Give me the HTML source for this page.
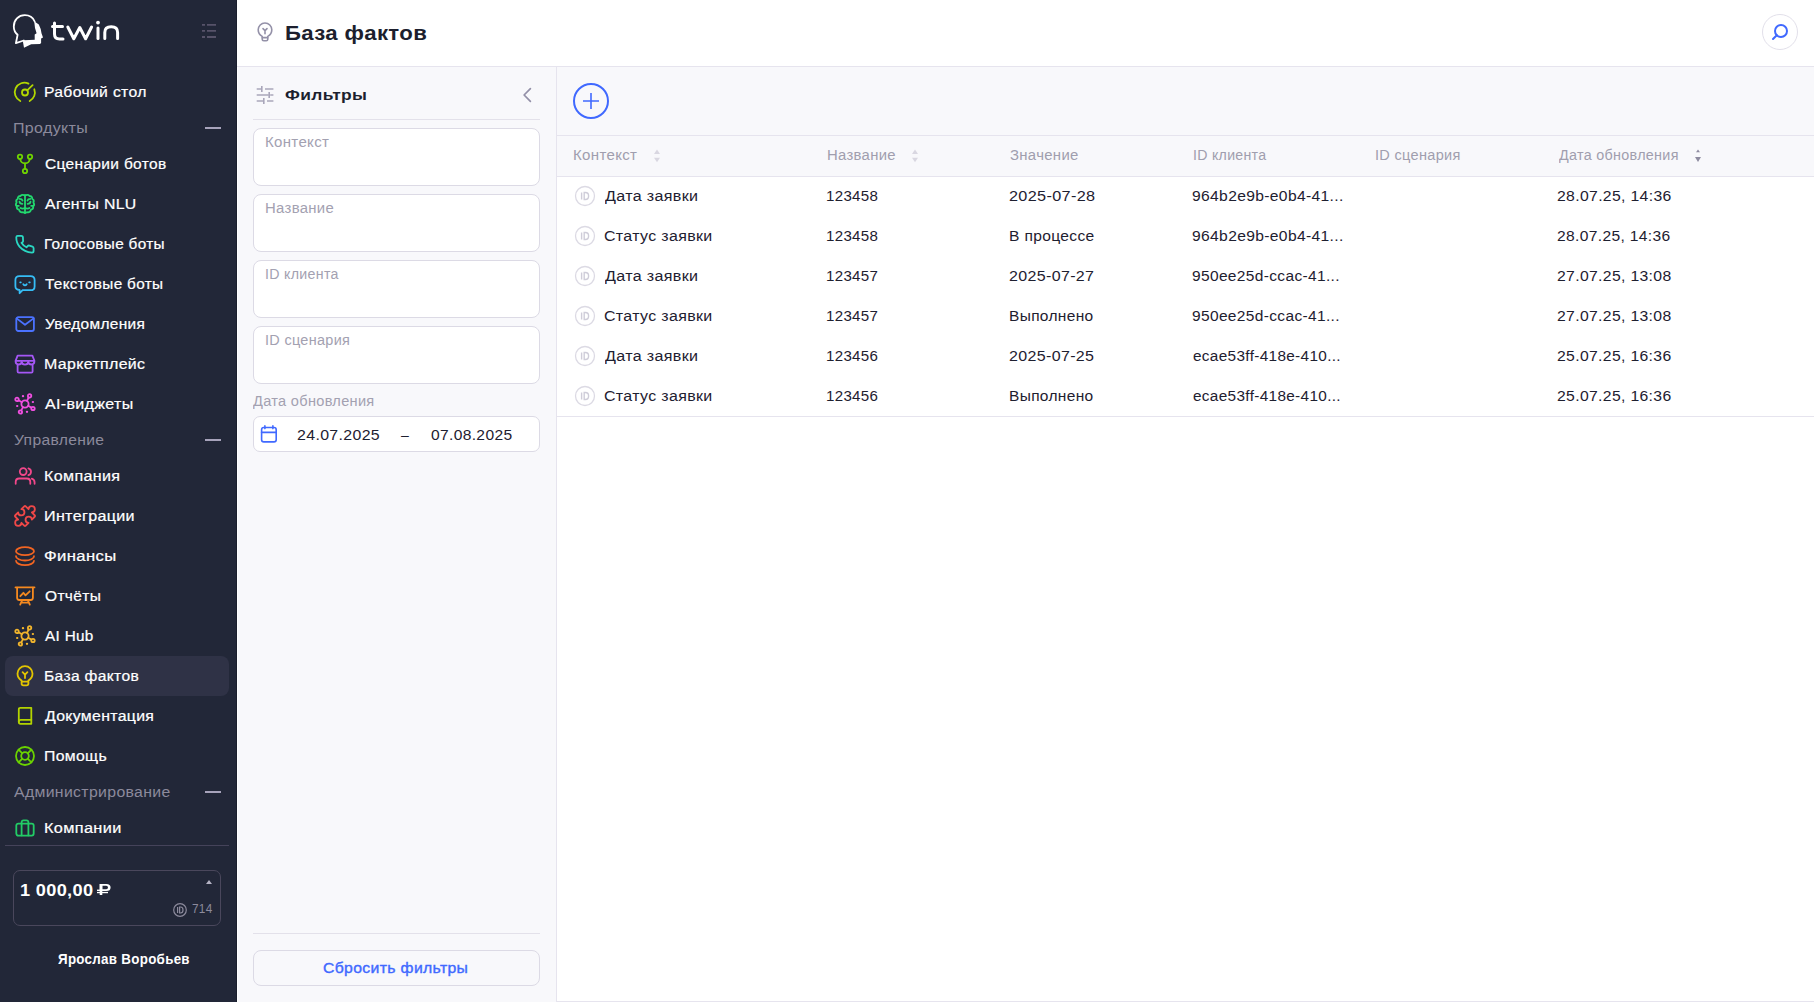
<!DOCTYPE html>
<html><head><meta charset="utf-8">
<style>
*{box-sizing:border-box;margin:0;padding:0}
html,body{width:1814px;height:1002px;overflow:hidden;background:#fff;font-family:"Liberation Sans",sans-serif}
.abs{position:absolute}
#sb{position:absolute;left:0;top:0;width:237px;height:1002px;background:#222738;border-right:1px solid #1a1e2d}
.it{position:absolute;left:0;width:236px;height:40px}
.act{position:absolute;left:5px;width:224px;height:40px;background:#2f3246;border-radius:8px}
.it svg{position:absolute;left:12px;top:7px;width:26px;height:26px;fill:none;stroke-width:1.8;stroke-linecap:round;stroke-linejoin:round}

.sec{position:absolute;left:0;width:236px;height:32px}

.sec i{position:absolute;left:205px;top:15px;width:16px;height:2px;background:#a7a3bb}
#hdr{position:absolute;left:237px;top:0;width:1577px;height:67px;background:#fff;border-bottom:1px solid #e6e4ee}
#fp{position:absolute;left:237px;top:67px;width:320px;height:935px;background:#f8f8fb;border-left:1px solid #fff;border-right:1px solid #e6e4ee}
#main{position:absolute;left:557px;top:67px;width:1257px;height:935px;background:#fff;border-bottom:1px solid #e6e4ee}
.inp{position:absolute;left:15px;width:287px;height:58px;background:#fff;border:1px solid #dcdae5;border-radius:8px}



.row{position:absolute;left:0;width:1257px;height:40px}
.idc{position:absolute;left:18px;top:10px;width:20px;height:20px}
.sort{position:absolute;top:13px;width:8px;height:14px}
.tx{position:absolute;white-space:nowrap;transform-origin:0 0}
</style></head><body>
<div id="sb">
<svg class="abs" style="left:0;top:0" width="130" height="60" viewBox="0 0 130 60">
  <path d="M34.7 21.5C33 17.5 29 15.2 24.8 15.2C18.5 15.2 13.8 20 13.8 26.4C13.8 30 15.3 32.8 17.6 34.8L15.9 43.2L23.8 40.5" fill="none" stroke="#fff" stroke-width="1.8" stroke-linejoin="round" stroke-linecap="round"/>
  <path d="M34.2 21.2L38.8 24.5L40.7 29L41.5 33.2L43 37.4L41.1 38.6L41.1 43.1L40 43.9L31.2 44.2L24 47.7L22.9 41.6L24 40.3L34.7 39.7L34.7 34.4L36.6 33.2L35 28Z" fill="#fff"/>
  <g fill="none" stroke="#fff" stroke-width="3" stroke-linecap="round" stroke-linejoin="round">
    <path d="M54.5 23V34Q54.5 39 59.5 39H63"/><path d="M52.5 26.5H62.5"/>
    <path d="M67.8 27L73.8 38.8L79.8 27.5L85.6 38.8L91.6 27"/>
    <path d="M98 28V38.6"/>
    <path d="M104.8 38.6V32.5Q104.8 26.8 111.2 26.8Q117.6 26.8 117.6 32.5V38.6"/>
  </g>
  <circle cx="98" cy="22.6" r="1.9" fill="#fff"/>
</svg>
<svg class="abs" style="left:196px;top:18px" width="26" height="26" viewBox="196 18 26 26"><g stroke="#575369" stroke-width="1.8"><path d="M202 24.8H205M207 24.8H216M202 30.9H205M207 30.9H216M202 37H205M207 37H216"/></g></svg>
<div class="it" style="top:72px"><svg viewBox="0 0 26 26" style="stroke:#b3d800"><path d="M8.3 22A9.5 9.5 0 0 1 16.5 4.6"/><path d="M22.3 10.3A9.5 9.5 0 0 1 17.7 22"/><circle cx="13" cy="13.5" r="3"/><path d="M15.2 11.3L20.6 6.2"/></svg></div>
<div class="sec" style="top:112px"><i></i></div>
<div class="it" style="top:144px"><svg viewBox="0 0 26 26" style="stroke:#6fd300"><circle cx="8" cy="5.8" r="2.2"/><circle cx="18" cy="5.8" r="2.2"/><circle cx="13" cy="20" r="2.2"/><path d="M8.2 8C8.5 10.5 10.5 12.3 13 12.3C15.5 12.3 17.5 10.5 17.8 8"/><path d="M13 12.3V17.8"/></svg></div>
<div class="it" style="top:184px"><svg viewBox="0 0 26 26" style="stroke:#22d86e"><path d="M13 4.2V21.8"/><path d="M13 4.6C11.5 3.6 9.5 3.8 8.3 5C6.6 5 5.6 6.3 5.8 7.8C4.4 8.6 4 10.3 4.6 11.5C3.8 12.6 3.8 14.4 4.8 15.3C4.6 17 5.6 18.4 7 18.7C7.6 20.4 9.4 21.6 11 21.2C11.7 21.6 12.5 21.8 13 21.8"/><path d="M13 4.6C14.5 3.6 16.5 3.8 17.7 5C19.4 5 20.4 6.3 20.2 7.8C21.6 8.6 22 10.3 21.4 11.5C22.2 12.6 22.2 14.4 21.2 15.3C21.4 17 20.4 18.4 19 18.7C18.4 20.4 16.6 21.6 15 21.2C14.3 21.6 13.5 21.8 13 21.8"/><path d="M7.6 7.8C9 7.8 10.2 8.5 10.5 9.6"/><path d="M7.5 10.6C7.6 12 8.8 12.8 10.4 12.8"/><path d="M18.4 7.8C17 7.8 15.8 8.5 15.5 9.6"/><path d="M18.5 10.6C18.4 12 17.2 12.8 15.6 12.8"/><path d="M5.2 14.8H6.8"/><path d="M19.2 14.8H20.8"/><path d="M8.5 17C9.5 17.6 11.5 17.6 13 17.2C14.5 17.6 16.5 17.6 17.5 17"/></svg></div>
<div class="it" style="top:224px"><svg viewBox="0 0 26 26" style="stroke:#2ad8c3"><path d="M5.6 4.8H9.4Q10.7 4.8 10.9 6L11.1 9.9Q11.1 10.8 10.3 11.3L9.5 11.7Q11.3 14.8 14.5 16.3L15.6 15.1Q16.4 14.3 17.4 14.6L20.5 15.7Q21.6 16.1 21.6 17.2V20Q21.6 21.6 20 21.6Q12.5 21.2 7.5 15.6Q4.2 11.6 4.3 6.3Q4.4 4.8 5.6 4.8Z"/></svg></div>
<div class="it" style="top:264px"><svg viewBox="0 0 26 26" style="stroke:#36bdf5"><path d="M7.5 5.2H18.5Q22.6 5.2 22.6 9V15.4Q22.6 19.2 18.6 19.2H10.6L7.6 22.2V19Q3.4 18.6 3.4 15.2V9Q3.4 5.2 7.5 5.2Z"/><path d="M11.3 13.2Q13 15.6 14.7 13.2"/><path d="M8.2 11.3H8.8M17.2 11.3H17.8"/></svg></div>
<div class="it" style="top:304px"><svg viewBox="0 0 26 26" style="stroke:#4b72ff"><rect x="4.3" y="6.2" width="17.6" height="13.8" rx="2"/><path d="M4.6 7.4L13 13.8L21.6 7.4"/></svg></div>
<div class="it" style="top:344px"><svg viewBox="0 0 26 26" style="stroke:#a557f5"><path d="M5.6 4.6H20.4L22.4 9.8V10.6Q22.4 13.5 19.4 13.5Q16.5 13.5 16.3 10.6Q16.1 13.6 13 13.6Q9.9 13.6 9.7 10.6Q9.5 13.5 6.6 13.5Q3.6 13.5 3.6 10.6V9.8Z"/><path d="M3.8 9.8H22.2"/><path d="M5.6 14V20.4Q5.6 21.6 6.8 21.6H19.4Q20.6 21.6 20.6 20.4V14"/></svg></div>
<div class="it" style="top:384px"><svg viewBox="0 0 26 26" style="stroke:#f04fe0"><circle cx="13" cy="13" r="3.6"/><circle cx="5" cy="8.4" r="1.7"/><circle cx="17.6" cy="4.9" r="1.7"/><circle cx="21" cy="17.5" r="1.7"/><circle cx="8.4" cy="21" r="1.7"/><path d="M6.6 9.3L9.9 11.2M16.7 6.5L15 9.8M19.4 16.6L16.2 14.8M9.3 19.4L11 16.2"/><path d="M10.9 5.2h0.2M20.8 11h0.2M5.1 15h0.2M14.9 20.8h0.2" stroke-width="2.2"/></svg></div>
<div class="sec" style="top:424px"><i></i></div>
<div class="it" style="top:456px"><svg viewBox="0 0 26 26" style="stroke:#f2478a"><circle cx="11.2" cy="8.6" r="3.4"/><path d="M16.4 5.3Q19 6.1 19 8.7Q19 11.3 16.4 12.2"/><path d="M3.7 20.8V19Q3.7 15.5 7.2 15.5H14.8Q18.3 15.5 18.3 19V20.8"/><path d="M19.8 15.7Q22.6 16.6 22.6 19.4V20.8"/></svg></div>
<div class="it" style="top:496px"><svg viewBox="0 0 26 26" style="stroke:#f04848"><path transform="translate(13 13) rotate(45) scale(1.05)" stroke-width="1.72" d="M-6 -7H-2.2A3 3 0 1 1 2.2 -7H6Q7 -7 7 -6V-2.2A3 3 0 1 0 7 2.2V6Q7 7 6 7H2.2A3 3 0 1 1 -2.2 7H-6Q-7 7 -7 6V2.2A3 3 0 1 0 -7 -2.2V-6Q-7 -7 -6 -7Z"/></svg></div>
<div class="it" style="top:536px"><svg viewBox="0 0 26 26" style="stroke:#f26522"><ellipse cx="13" cy="8.2" rx="9" ry="4"/><path d="M4 13.2A9 4.3 0 0 0 22 13.2"/><path d="M4 17.8A9 4.3 0 0 0 22 17.8"/></svg></div>
<div class="it" style="top:576px"><svg viewBox="0 0 26 26" style="stroke:#f5891f"><path d="M3.5 4.4H22.5"/><path d="M5.1 4.6V14.8Q5.1 17 7.3 17H18.7Q20.9 17 20.9 14.8V4.6"/><path d="M8.3 13.2L11.4 9.8L13.5 12.4L17.7 8.3"/><path d="M10.2 17.2L8.2 21.6M15.8 17.2L17.8 21.6M9.6 19.6H16.4"/></svg></div>
<div class="it" style="top:616px"><svg viewBox="0 0 26 26" style="stroke:#f2b52c"><circle cx="13" cy="13" r="3.6"/><circle cx="5" cy="8.4" r="1.7"/><circle cx="17.6" cy="4.9" r="1.7"/><circle cx="21" cy="17.5" r="1.7"/><circle cx="8.4" cy="21" r="1.7"/><path d="M6.6 9.3L9.9 11.2M16.7 6.5L15 9.8M19.4 16.6L16.2 14.8M9.3 19.4L11 16.2"/><path d="M10.9 5.2h0.2M20.8 11h0.2M5.1 15h0.2M14.9 20.8h0.2" stroke-width="2.2"/></svg></div>
<div class="act" style="top:656px"></div>
<div class="it" style="top:656px"><svg viewBox="0 0 26 26" style="stroke:#e3c500"><path d="M9.6 17.6Q5.5 15.2 5.5 10.6A7.5 7.5 0 0 1 20.5 10.6Q20.5 15.2 16.4 17.6V20.6Q16.4 22.4 14.6 22.4H11.4Q9.6 22.4 9.6 20.6Z"/><path d="M9.8 18.6H16.2"/><path d="M10.6 9.2L13 11.6L15.4 9.2M13 11.6V15"/></svg></div>
<div class="it" style="top:696px"><svg viewBox="0 0 26 26" style="stroke:#b3d300"><path d="M19.3 4.8H8.3Q6.8 4.8 6.8 6.3V19Q6.8 20.8 8.6 20.8H19.3Z"/><path d="M6.8 18.8Q6.8 16.8 8.8 16.8H19.3"/></svg></div>
<div class="it" style="top:736px"><svg viewBox="0 0 26 26" style="stroke:#6bd300"><circle cx="13" cy="13" r="9"/><circle cx="13" cy="13" r="3.8"/><path d="M6.6 6.6L10.3 10.3M19.4 6.6L15.7 10.3M6.6 19.4L10.3 15.7M19.4 19.4L15.7 15.7"/></svg></div>
<div class="sec" style="top:776px"><i></i></div>
<div class="it" style="top:808px"><svg viewBox="0 0 26 26" style="stroke:#22cc66"><rect x="4.3" y="8.6" width="17.4" height="12" rx="2"/><path d="M9.6 8.6V7.3Q9.6 5.3 11.6 5.3H14.4Q16.4 5.3 16.4 7.3V8.6"/><path d="M9.6 8.8V20.4M16.4 8.8V20.4"/></svg></div>
<div class="abs" style="left:5px;top:845px;width:224px;height:1px;background:#45435a"></div>
<div class="abs" style="left:13px;top:870px;width:208px;height:56px;border:1px solid #4a475c;border-radius:7px"></div>
<svg class="abs" style="left:95px;top:882px" width="17" height="16" viewBox="95 882 17 16"><g fill="#fff"><rect x="99.7" y="884" width="2.6" height="11"/><path fill-rule="evenodd" d="M99.7 884H106.3Q110.6 884 110.6 887.5Q110.6 891 106.3 891H99.7ZM102.3 885.7H106.2Q108 885.7 108 887.5Q108 889.3 106.2 889.3H102.3Z"/><rect x="97" y="889.6" width="5" height="1.4"/><rect x="97" y="891.9" width="11" height="1.3"/></g></svg>
<svg class="abs" style="left:205px;top:879px" width="8" height="6" viewBox="0 0 8 6"><path d="M1 5L4 1L7 5Z" fill="#b5b3c4"/></svg>
<svg class="abs" style="left:172px;top:902px" width="16" height="16" viewBox="0 0 16 16"><circle cx="8" cy="8" r="6.3" fill="none" stroke="#8c8a9c" stroke-width="1.2"/><path d="M5.6 5V11M7.6 5H8.6Q11 5 11 8Q11 11 8.6 11H7.6Z" fill="none" stroke="#8c8a9c" stroke-width="1.2"/></svg>
</div>
<div id="hdr"></div>
<svg class="abs" style="left:252px;top:19px" width="26" height="26" viewBox="0 0 26 26"><g fill="none" stroke="#9491a8" stroke-width="1.6" stroke-linecap="round" stroke-linejoin="round"><path d="M10.2 17.4Q6.2 15.2 6.2 10.8A6.8 6.8 0 0 1 19.8 10.8Q19.8 15.2 15.8 17.4V20.2Q15.8 21.8 14.2 21.8H11.8Q10.2 21.8 10.2 20.2Z"/><path d="M10.4 18.6H15.6"/><path d="M11 9.6L13 11.6L15 9.6M13 11.6V14.8"/></g></svg>
<div class="abs" style="left:1762px;top:14px;width:36px;height:36px;border:1px solid #e2e0ea;border-radius:50%"></div>
<svg class="abs" style="left:1766px;top:18px" width="28" height="28" viewBox="1766 18 28 28"><g fill="none" stroke="#4069ff" stroke-width="2" stroke-linecap="round"><circle cx="1781" cy="31" r="6"/><path d="M1776.8 35.2L1773 39"/></g></svg>
<div id="fp"></div>
<svg class="abs" style="left:254px;top:84px" width="22" height="22" viewBox="254 84 22 22"><g stroke="#a9a6ba" stroke-width="1.6" fill="none"><path d="M256.7 89H261M265 89H273.4M261.8 86V92"/><path d="M256.7 95H268.3M270.2 95H273.4M269.2 92V98"/><path d="M256.7 101H263M267 101H273.4M263.8 98V104"/></g></svg>
<svg class="abs" style="left:518px;top:84px" width="20" height="22" viewBox="518 84 20 22"><path d="M530.4 88.6L524.1 95L530.4 101.4" fill="none" stroke="#9390a8" stroke-width="1.7" stroke-linecap="round" stroke-linejoin="round"/></svg>
<div class="abs" style="left:253px;top:119px;width:287px;height:1px;background:#e3e1ea"></div>
<div class="inp" style="left:253px;top:128px"></div>
<div class="inp" style="left:253px;top:194px"></div>
<div class="inp" style="left:253px;top:260px"></div>
<div class="inp" style="left:253px;top:326px"></div>
<div class="abs" style="left:253px;top:416px;width:287px;height:36px;background:#fff;border:1px solid #dcdae5;border-radius:7px"></div>
<svg class="abs" style="left:258px;top:423px" width="22" height="22" viewBox="258 423 22 22"><g fill="none" stroke="#4069ff" stroke-width="1.6" stroke-linecap="round" stroke-linejoin="round"><rect x="261.6" y="427.5" width="14.6" height="14.4" rx="2.2"/><path d="M261.6 432.4H276.2M264.9 425.9V428.6M272.9 425.9V428.6"/></g></svg>
<div class="abs" style="left:253px;top:933px;width:287px;height:1px;background:#e3e1ea"></div>
<div class="abs" style="left:253px;top:950px;width:287px;height:36px;border:1px solid #dcdae5;border-radius:8px"></div>
<div id="main"></div>
<div class="abs" style="left:557px;top:67px;width:1257px;height:69px;background:#f8f8fb;border-bottom:1px solid #e6e4ee"></div>
<svg class="abs" style="left:570px;top:80px" width="42" height="42" viewBox="570 80 42 42"><g fill="none" stroke="#4069ff" stroke-width="2"><circle cx="591" cy="101" r="17"/><path d="M583 101H599M591 93V109" stroke-width="1.6"/></g></svg>
<div class="abs" style="left:557px;top:136px;width:1257px;height:41px;background:#f8f8fb;border-bottom:1px solid #e6e4ee"></div>
<svg class="abs" style="left:653px;top:147px" width="8" height="18" viewBox="0 0 8 18"><path d="M1 7L4 2.6L7 7Z" fill="#d9d7e1"/><path d="M1 10.8L4 15.2L7 10.8Z" fill="#d9d7e1"/></svg>
<svg class="abs" style="left:911px;top:147px" width="8" height="18" viewBox="0 0 8 18"><path d="M1 7L4 2.6L7 7Z" fill="#d9d7e1"/><path d="M1 10.8L4 15.2L7 10.8Z" fill="#d9d7e1"/></svg>
<svg class="abs" style="left:1694px;top:147px" width="8" height="18" viewBox="0 0 8 18"><path d="M2 5.2L4 2.6L6 5.2Z" fill="#8e8ba0"/><path d="M1 10L4 15L7 10Z" fill="#8e8ba0"/></svg>
<svg class="abs" style="left:574px;top:185px" width="22" height="22" viewBox="0 0 22 22"><circle cx="11" cy="11" r="9.5" fill="none" stroke="#dcdae4" stroke-width="1.3"/><path d="M7.6 7.5V14.5M10.2 7.5H11.4Q14.6 7.5 14.6 11Q14.6 14.5 11.4 14.5H10.2Z" fill="none" stroke="#cfcdd9" stroke-width="1.4"/></svg>
<svg class="abs" style="left:574px;top:225px" width="22" height="22" viewBox="0 0 22 22"><circle cx="11" cy="11" r="9.5" fill="none" stroke="#dcdae4" stroke-width="1.3"/><path d="M7.6 7.5V14.5M10.2 7.5H11.4Q14.6 7.5 14.6 11Q14.6 14.5 11.4 14.5H10.2Z" fill="none" stroke="#cfcdd9" stroke-width="1.4"/></svg>
<svg class="abs" style="left:574px;top:265px" width="22" height="22" viewBox="0 0 22 22"><circle cx="11" cy="11" r="9.5" fill="none" stroke="#dcdae4" stroke-width="1.3"/><path d="M7.6 7.5V14.5M10.2 7.5H11.4Q14.6 7.5 14.6 11Q14.6 14.5 11.4 14.5H10.2Z" fill="none" stroke="#cfcdd9" stroke-width="1.4"/></svg>
<svg class="abs" style="left:574px;top:305px" width="22" height="22" viewBox="0 0 22 22"><circle cx="11" cy="11" r="9.5" fill="none" stroke="#dcdae4" stroke-width="1.3"/><path d="M7.6 7.5V14.5M10.2 7.5H11.4Q14.6 7.5 14.6 11Q14.6 14.5 11.4 14.5H10.2Z" fill="none" stroke="#cfcdd9" stroke-width="1.4"/></svg>
<svg class="abs" style="left:574px;top:345px" width="22" height="22" viewBox="0 0 22 22"><circle cx="11" cy="11" r="9.5" fill="none" stroke="#dcdae4" stroke-width="1.3"/><path d="M7.6 7.5V14.5M10.2 7.5H11.4Q14.6 7.5 14.6 11Q14.6 14.5 11.4 14.5H10.2Z" fill="none" stroke="#cfcdd9" stroke-width="1.4"/></svg>
<svg class="abs" style="left:574px;top:385px" width="22" height="22" viewBox="0 0 22 22"><circle cx="11" cy="11" r="9.5" fill="none" stroke="#dcdae4" stroke-width="1.3"/><path d="M7.6 7.5V14.5M10.2 7.5H11.4Q14.6 7.5 14.6 11Q14.6 14.5 11.4 14.5H10.2Z" fill="none" stroke="#cfcdd9" stroke-width="1.4"/></svg>
<div class="abs" style="left:557px;top:416px;width:1257px;height:1px;background:#e6e4ee"></div>
<div id="sb0" class="tx" style="left:44.00px;top:72px;font-size:14px;font-weight:normal;color:#fff;line-height:40px;letter-spacing:0.300px;transform:scaleX(1.1223);-webkit-text-stroke:0.2px #fff;">Рабочий стол</div>
<div id="sb1" class="tx" style="left:45.00px;top:144px;font-size:14px;font-weight:normal;color:#fff;line-height:40px;letter-spacing:0.300px;transform:scaleX(1.1066);-webkit-text-stroke:0.2px #fff;">Сценарии ботов</div>
<div id="sb2" class="tx" style="left:45.00px;top:184px;font-size:14px;font-weight:normal;color:#fff;line-height:40px;letter-spacing:0.300px;transform:scaleX(1.1301);-webkit-text-stroke:0.2px #fff;">Агенты NLU</div>
<div id="sb3" class="tx" style="left:44.00px;top:224px;font-size:14px;font-weight:normal;color:#fff;line-height:40px;letter-spacing:0.300px;transform:scaleX(1.0935);-webkit-text-stroke:0.2px #fff;">Голосовые боты</div>
<div id="sb4" class="tx" style="left:45.00px;top:264px;font-size:14px;font-weight:normal;color:#fff;line-height:40px;letter-spacing:0.300px;transform:scaleX(1.0935);-webkit-text-stroke:0.2px #fff;">Текстовые боты</div>
<div id="sb5" class="tx" style="left:45.00px;top:304px;font-size:14px;font-weight:normal;color:#fff;line-height:40px;letter-spacing:0.300px;transform:scaleX(1.1027);-webkit-text-stroke:0.2px #fff;">Уведомления</div>
<div id="sb6" class="tx" style="left:44.00px;top:344px;font-size:14px;font-weight:normal;color:#fff;line-height:40px;letter-spacing:0.300px;transform:scaleX(1.1389);-webkit-text-stroke:0.2px #fff;">Маркетплейс</div>
<div id="sb7" class="tx" style="left:45.00px;top:384px;font-size:14px;font-weight:normal;color:#fff;line-height:40px;letter-spacing:0.300px;transform:scaleX(1.1429);-webkit-text-stroke:0.2px #fff;">AI-виджеты</div>
<div id="sb8" class="tx" style="left:44.00px;top:456px;font-size:14px;font-weight:normal;color:#fff;line-height:40px;letter-spacing:0.300px;transform:scaleX(1.1477);-webkit-text-stroke:0.2px #fff;">Компания</div>
<div id="sb9" class="tx" style="left:44.00px;top:496px;font-size:14px;font-weight:normal;color:#fff;line-height:40px;letter-spacing:0.300px;transform:scaleX(1.1480);-webkit-text-stroke:0.2px #fff;">Интеграции</div>
<div id="sb10" class="tx" style="left:44.00px;top:536px;font-size:14px;font-weight:normal;color:#fff;line-height:40px;letter-spacing:0.300px;transform:scaleX(1.1905);-webkit-text-stroke:0.2px #fff;">Финансы</div>
<div id="sb11" class="tx" style="left:45.00px;top:576px;font-size:14px;font-weight:normal;color:#fff;line-height:40px;letter-spacing:0.300px;transform:scaleX(1.1082);-webkit-text-stroke:0.2px #fff;">Отчёты</div>
<div id="sb12" class="tx" style="left:45.00px;top:616px;font-size:14px;font-weight:normal;color:#fff;line-height:40px;letter-spacing:0.300px;transform:scaleX(1.0916);-webkit-text-stroke:0.2px #fff;">AI Hub</div>
<div id="sb13" class="tx" style="left:44.00px;top:656px;font-size:14px;font-weight:normal;color:#fff;line-height:40px;letter-spacing:0.300px;transform:scaleX(1.1146);-webkit-text-stroke:0.2px #fff;">База фактов</div>
<div id="sb14" class="tx" style="left:45.00px;top:696px;font-size:14px;font-weight:normal;color:#fff;line-height:40px;letter-spacing:0.300px;transform:scaleX(1.1294);-webkit-text-stroke:0.2px #fff;">Документация</div>
<div id="sb15" class="tx" style="left:44.00px;top:736px;font-size:14px;font-weight:normal;color:#fff;line-height:40px;letter-spacing:0.300px;transform:scaleX(1.1275);-webkit-text-stroke:0.2px #fff;">Помощь</div>
<div id="sb16" class="tx" style="left:44.00px;top:808px;font-size:14px;font-weight:normal;color:#fff;line-height:40px;letter-spacing:0.300px;transform:scaleX(1.1631);-webkit-text-stroke:0.2px #fff;">Компании</div>
<div id="sec0" class="tx" style="left:13.00px;top:112px;font-size:14px;font-weight:normal;color:#8c8a9c;line-height:32px;letter-spacing:0.300px;transform:scaleX(1.1441);">Продукты</div>
<div id="sec1" class="tx" style="left:14.00px;top:424px;font-size:14px;font-weight:normal;color:#8c8a9c;line-height:32px;letter-spacing:0.300px;transform:scaleX(1.1175);">Управление</div>
<div id="sec2" class="tx" style="left:14.00px;top:776px;font-size:14px;font-weight:normal;color:#8c8a9c;line-height:32px;letter-spacing:0.300px;transform:scaleX(1.1301);">Администрирование</div>
<div id="bal" class="tx" style="left:20.00px;top:881px;font-size:16px;font-weight:bold;color:#fff;line-height:20px;letter-spacing:0.300px;transform:scaleX(1.1344);">1 000,00</div>
<div id="n714" class="tx" style="left:192.00px;top:902px;font-size:12.5px;font-weight:normal;color:#8c8a9c;line-height:15px;letter-spacing:0.300px;transform:scaleX(0.9411);">714</div>
<div id="name" class="tx" style="left:58.00px;top:951px;font-size:14px;font-weight:bold;color:#fff;line-height:16px;letter-spacing:0.300px;transform:scaleX(0.9545);">Ярослав Воробьев</div>
<div id="title" class="tx" style="left:285.00px;top:21px;font-size:20px;font-weight:bold;color:#1c1f2e;line-height:24px;letter-spacing:0.300px;transform:scaleX(1.1095);">База фактов</div>
<div id="filt" class="tx" style="left:285.00px;top:86px;font-size:15px;font-weight:bold;color:#1c1f2e;line-height:18px;letter-spacing:0.300px;transform:scaleX(1.1610);">Фильтры</div>
<div id="ph0" class="tx" style="left:265.00px;top:134px;font-size:14px;font-weight:normal;color:#a3a1b1;line-height:16px;letter-spacing:0.300px;transform:scaleX(1.0728);">Контекст</div>
<div id="ph1" class="tx" style="left:265.00px;top:200px;font-size:14px;font-weight:normal;color:#a3a1b1;line-height:16px;letter-spacing:0.300px;transform:scaleX(1.0635);">Название</div>
<div id="ph2" class="tx" style="left:265.00px;top:266px;font-size:14px;font-weight:normal;color:#a3a1b1;line-height:16px;letter-spacing:0.300px;transform:scaleX(1.0139);">ID клиента</div>
<div id="ph3" class="tx" style="left:265.00px;top:332px;font-size:14px;font-weight:normal;color:#a3a1b1;line-height:16px;letter-spacing:0.300px;transform:scaleX(1.0320);">ID сценария</div>
<div id="dlab" class="tx" style="left:253.00px;top:393px;font-size:14px;font-weight:normal;color:#a3a1b1;line-height:16px;letter-spacing:0.300px;transform:scaleX(1.0396);">Дата обновления</div>
<div id="d1" class="tx" style="left:297.00px;top:427px;font-size:14px;font-weight:normal;color:#1e2030;line-height:16px;letter-spacing:0.300px;transform:scaleX(1.1363);">24.07.2025</div>
<div id="d2" class="tx" style="left:401.00px;top:427px;font-size:14px;font-weight:normal;color:#1e2030;line-height:16px;letter-spacing:0.000px;transform:scaleX(1.0000);">–</div>
<div id="d3" class="tx" style="left:431.00px;top:427px;font-size:14px;font-weight:normal;color:#1e2030;line-height:16px;letter-spacing:0.300px;transform:scaleX(1.1142);">07.08.2025</div>
<div id="reset" class="tx" style="left:323.00px;top:960px;font-size:14px;font-weight:normal;color:#4069ff;line-height:16px;letter-spacing:0.300px;transform:scaleX(1.1270);-webkit-text-stroke:0.35px #4069ff;">Сбросить фильтры</div>
<div id="th0" class="tx" style="left:573.00px;top:135px;font-size:14px;font-weight:normal;color:#a09eae;line-height:40px;letter-spacing:0.300px;transform:scaleX(1.0751);">Контекст</div>
<div id="th1" class="tx" style="left:827.00px;top:135px;font-size:14px;font-weight:normal;color:#a09eae;line-height:40px;letter-spacing:0.300px;transform:scaleX(1.0602);">Название</div>
<div id="th2" class="tx" style="left:1010.00px;top:135px;font-size:14px;font-weight:normal;color:#a09eae;line-height:40px;letter-spacing:0.300px;transform:scaleX(1.0643);">Значение</div>
<div id="th3" class="tx" style="left:1193.00px;top:135px;font-size:14px;font-weight:normal;color:#a09eae;line-height:40px;letter-spacing:0.300px;transform:scaleX(1.0085);">ID клиента</div>
<div id="th4" class="tx" style="left:1375.00px;top:135px;font-size:14px;font-weight:normal;color:#a09eae;line-height:40px;letter-spacing:0.300px;transform:scaleX(1.0372);">ID сценария</div>
<div id="th5" class="tx" style="left:1559.00px;top:135px;font-size:14px;font-weight:normal;color:#a09eae;line-height:40px;letter-spacing:0.300px;transform:scaleX(1.0238);">Дата обновления</div>
<div id="r0c0" class="tx" style="left:605.00px;top:176px;font-size:14px;font-weight:normal;color:#1e2030;line-height:40px;letter-spacing:0.300px;transform:scaleX(1.1477);">Дата заявки</div>
<div id="r0c1" class="tx" style="left:826.00px;top:176px;font-size:14px;font-weight:normal;color:#1e2030;line-height:40px;letter-spacing:0.300px;transform:scaleX(1.0769);">123458</div>
<div id="r0c2" class="tx" style="left:1009.00px;top:176px;font-size:14px;font-weight:normal;color:#1e2030;line-height:40px;letter-spacing:0.300px;transform:scaleX(1.1588);">2025-07-28</div>
<div id="r0c3" class="tx" style="left:1192.00px;top:176px;font-size:14px;font-weight:normal;color:#1e2030;line-height:40px;letter-spacing:0.300px;transform:scaleX(1.1173);">964b2e9b-e0b4-41...</div>
<div id="r0c4" class="tx" style="left:1557.00px;top:176px;font-size:14px;font-weight:normal;color:#1e2030;line-height:40px;letter-spacing:0.300px;transform:scaleX(1.1260);">28.07.25, 14:36</div>
<div id="r1c0" class="tx" style="left:604.00px;top:216px;font-size:14px;font-weight:normal;color:#1e2030;line-height:40px;letter-spacing:0.300px;transform:scaleX(1.1398);">Статус заявки</div>
<div id="r1c1" class="tx" style="left:826.00px;top:216px;font-size:14px;font-weight:normal;color:#1e2030;line-height:40px;letter-spacing:0.300px;transform:scaleX(1.0769);">123458</div>
<div id="r1c2" class="tx" style="left:1009.00px;top:216px;font-size:14px;font-weight:normal;color:#1e2030;line-height:40px;letter-spacing:0.300px;transform:scaleX(1.1146);">В процессе</div>
<div id="r1c3" class="tx" style="left:1192.00px;top:216px;font-size:14px;font-weight:normal;color:#1e2030;line-height:40px;letter-spacing:0.300px;transform:scaleX(1.1173);">964b2e9b-e0b4-41...</div>
<div id="r1c4" class="tx" style="left:1557.00px;top:216px;font-size:14px;font-weight:normal;color:#1e2030;line-height:40px;letter-spacing:0.300px;transform:scaleX(1.1150);">28.07.25, 14:36</div>
<div id="r2c0" class="tx" style="left:605.00px;top:256px;font-size:14px;font-weight:normal;color:#1e2030;line-height:40px;letter-spacing:0.300px;transform:scaleX(1.1477);">Дата заявки</div>
<div id="r2c1" class="tx" style="left:826.00px;top:256px;font-size:14px;font-weight:normal;color:#1e2030;line-height:40px;letter-spacing:0.300px;transform:scaleX(1.0769);">123457</div>
<div id="r2c2" class="tx" style="left:1009.00px;top:256px;font-size:14px;font-weight:normal;color:#1e2030;line-height:40px;letter-spacing:0.300px;transform:scaleX(1.1437);">2025-07-27</div>
<div id="r2c3" class="tx" style="left:1192.00px;top:256px;font-size:14px;font-weight:normal;color:#1e2030;line-height:40px;letter-spacing:0.300px;transform:scaleX(1.1088);">950ee25d-ccac-41...</div>
<div id="r2c4" class="tx" style="left:1557.00px;top:256px;font-size:14px;font-weight:normal;color:#1e2030;line-height:40px;letter-spacing:0.300px;transform:scaleX(1.1248);">27.07.25, 13:08</div>
<div id="r3c0" class="tx" style="left:604.00px;top:296px;font-size:14px;font-weight:normal;color:#1e2030;line-height:40px;letter-spacing:0.300px;transform:scaleX(1.1398);">Статус заявки</div>
<div id="r3c1" class="tx" style="left:826.00px;top:296px;font-size:14px;font-weight:normal;color:#1e2030;line-height:40px;letter-spacing:0.300px;transform:scaleX(1.0769);">123457</div>
<div id="r3c2" class="tx" style="left:1009.00px;top:296px;font-size:14px;font-weight:normal;color:#1e2030;line-height:40px;letter-spacing:0.300px;transform:scaleX(1.1067);">Выполнено</div>
<div id="r3c3" class="tx" style="left:1192.00px;top:296px;font-size:14px;font-weight:normal;color:#1e2030;line-height:40px;letter-spacing:0.300px;transform:scaleX(1.1088);">950ee25d-ccac-41...</div>
<div id="r3c4" class="tx" style="left:1557.00px;top:296px;font-size:14px;font-weight:normal;color:#1e2030;line-height:40px;letter-spacing:0.300px;transform:scaleX(1.1248);">27.07.25, 13:08</div>
<div id="r4c0" class="tx" style="left:605.00px;top:336px;font-size:14px;font-weight:normal;color:#1e2030;line-height:40px;letter-spacing:0.300px;transform:scaleX(1.1477);">Дата заявки</div>
<div id="r4c1" class="tx" style="left:826.00px;top:336px;font-size:14px;font-weight:normal;color:#1e2030;line-height:40px;letter-spacing:0.300px;transform:scaleX(1.0769);">123456</div>
<div id="r4c2" class="tx" style="left:1009.00px;top:336px;font-size:14px;font-weight:normal;color:#1e2030;line-height:40px;letter-spacing:0.300px;transform:scaleX(1.1437);">2025-07-25</div>
<div id="r4c3" class="tx" style="left:1193.00px;top:336px;font-size:14px;font-weight:normal;color:#1e2030;line-height:40px;letter-spacing:0.300px;transform:scaleX(1.0960);">ecae53ff-418e-410...</div>
<div id="r4c4" class="tx" style="left:1557.00px;top:336px;font-size:14px;font-weight:normal;color:#1e2030;line-height:40px;letter-spacing:0.300px;transform:scaleX(1.1248);">25.07.25, 16:36</div>
<div id="r5c0" class="tx" style="left:604.00px;top:376px;font-size:14px;font-weight:normal;color:#1e2030;line-height:40px;letter-spacing:0.300px;transform:scaleX(1.1398);">Статус заявки</div>
<div id="r5c1" class="tx" style="left:826.00px;top:376px;font-size:14px;font-weight:normal;color:#1e2030;line-height:40px;letter-spacing:0.300px;transform:scaleX(1.0769);">123456</div>
<div id="r5c2" class="tx" style="left:1009.00px;top:376px;font-size:14px;font-weight:normal;color:#1e2030;line-height:40px;letter-spacing:0.300px;transform:scaleX(1.1067);">Выполнено</div>
<div id="r5c3" class="tx" style="left:1193.00px;top:376px;font-size:14px;font-weight:normal;color:#1e2030;line-height:40px;letter-spacing:0.300px;transform:scaleX(1.0960);">ecae53ff-418e-410...</div>
<div id="r5c4" class="tx" style="left:1557.00px;top:376px;font-size:14px;font-weight:normal;color:#1e2030;line-height:40px;letter-spacing:0.300px;transform:scaleX(1.1248);">25.07.25, 16:36</div>
</body></html>
